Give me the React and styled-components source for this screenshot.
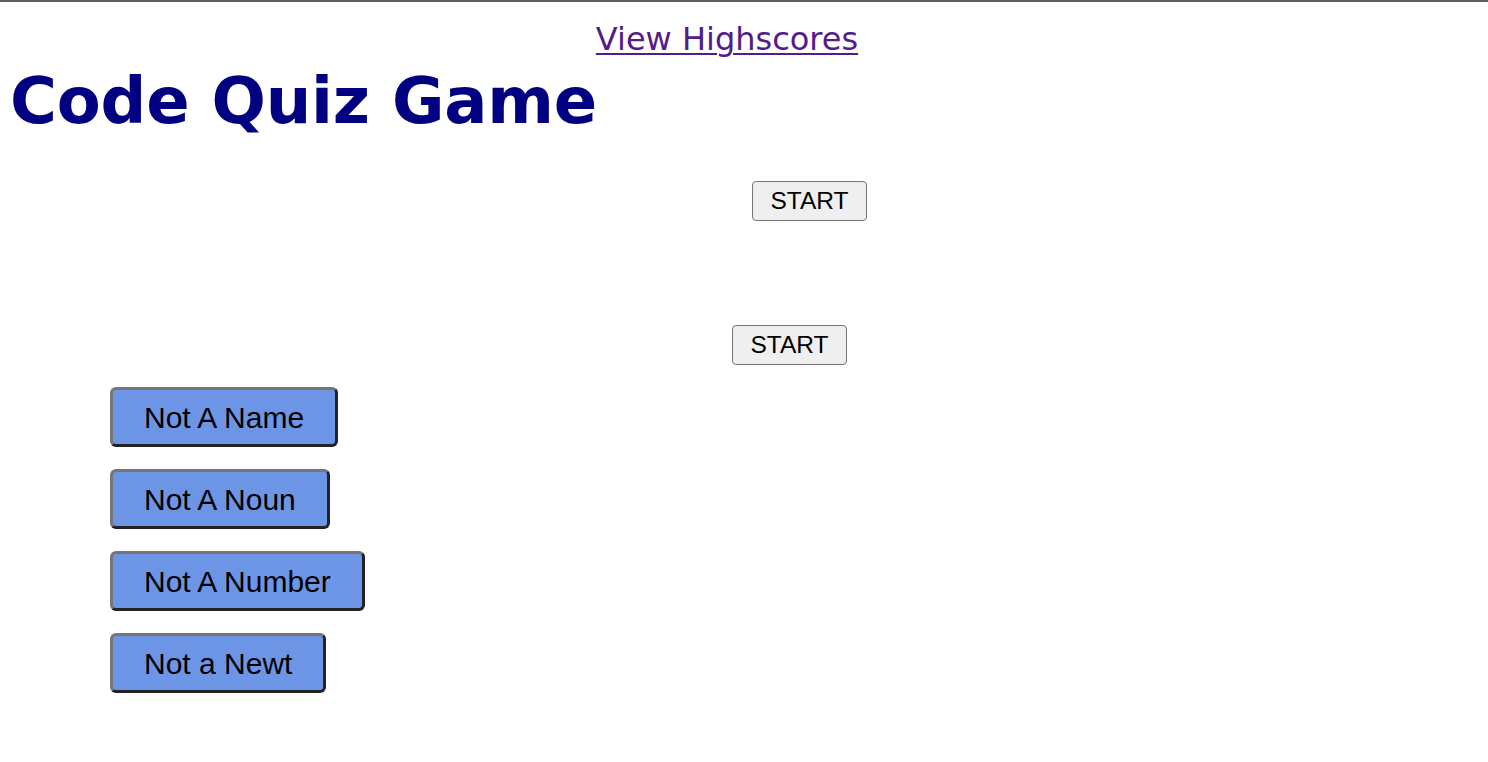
import React from "react";
import styled, { createGlobalStyle } from "styled-components";

const Global = createGlobalStyle`
  html, body { margin: 0; padding: 0; background: #ffffff; }
  body { font-family: "Liberation Sans", Arial, sans-serif; }
`;

const Page = styled.div`
  border-top: 2px solid #5f5f5f;
  padding: 0 8px 40px;
  min-height: 760px;
  box-sizing: border-box;
`;

const Header = styled.header`
  display: flex;
  justify-content: center;
  padding-top: 18px;
  padding-right: 34px;
`;

const HighscoreLink = styled.a`
  font-family: "DejaVu Sans", Verdana, sans-serif;
  font-size: 32px;
  color: #551a8b;
  text-decoration: underline;
  text-underline-offset: 3px;
  text-decoration-thickness: 2px;
`;

const Title = styled.h1`
  margin: 6px 0 0 2px;
  font-family: "DejaVu Sans", Verdana, sans-serif;
  font-weight: bold;
  font-size: 64px;
  letter-spacing: -0.2px;
  color: #000080;
`;

const StartRow = styled.div`
  display: flex;
  justify-content: center;
  margin-top: ${(p) => p.$top}px;
  padding-left: ${(p) => p.$shift}px;
`;

const StartButton = styled.button`
  font-family: "Liberation Sans", Arial, sans-serif;
  font-size: 24.5px;
  line-height: 28px;
  padding: 5px 17px 5px 17px;
  background: #efefef;
  color: #000;
  border: 1px solid #767676;
  border-radius: 4px;
  cursor: pointer;
`;

const AnswerList = styled.div`
  display: flex;
  flex-direction: column;
  align-items: flex-start;
  gap: 22px;
  margin-top: 22px;
  padding-left: 102px;
`;

const AnswerButton = styled.button`
  font-family: "Liberation Sans", Arial, sans-serif;
  font-size: 30px;
  line-height: 34px;
  padding: 11px 31px 9px;
  background: #6d95e6;
  color: #000;
  border-style: solid;
  border-width: 3px;
  border-color: #767676 #232323 #232323 #767676;
  border-radius: 6px;
  cursor: pointer;
`;

const answers = ["Not A Name", "Not A Noun", "Not A Number", "Not a Newt"];

export default function App() {
  return (
    <>
      <Global />
      <Page>
        <Header>
          <HighscoreLink href="#highscores">View Highscores</HighscoreLink>
        </Header>
        <Title>Code Quiz Game</Title>
        <StartRow $top={43} $shift={131}>
          <StartButton>START</StartButton>
        </StartRow>
        <StartRow $top={104} $shift={91}>
          <StartButton>START</StartButton>
        </StartRow>
        <AnswerList>
          {answers.map((a) => (
            <AnswerButton key={a}>{a}</AnswerButton>
          ))}
        </AnswerList>
      </Page>
    </>
  );
}
